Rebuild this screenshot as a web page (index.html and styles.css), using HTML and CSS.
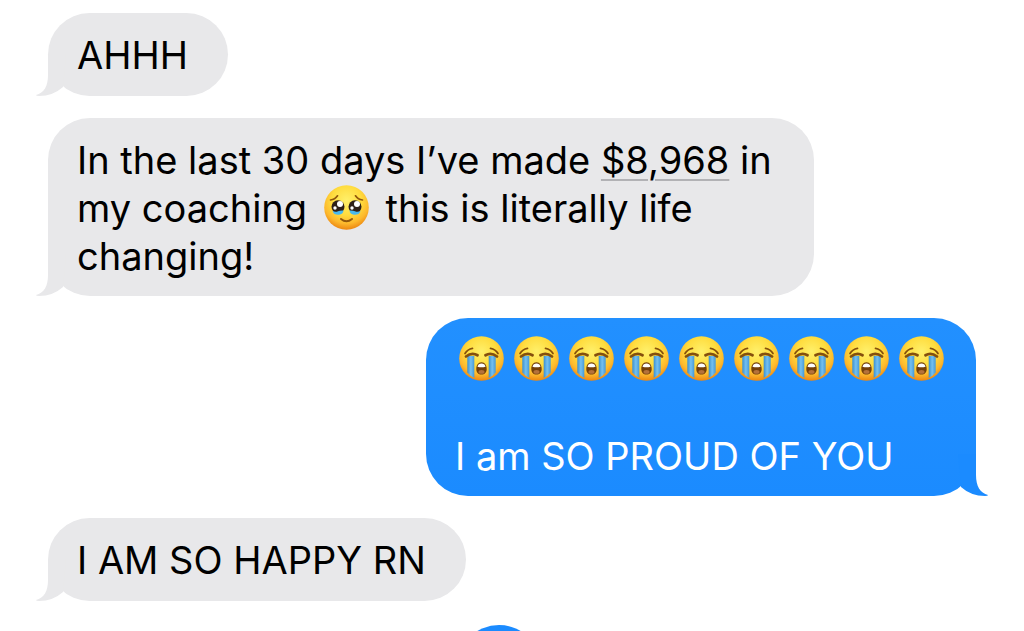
FILE: index.html
```
<!DOCTYPE html>
<html lang="en">

<head>
  <meta charset="UTF-8">
  <meta name="viewport" content="width=device-width, initial-scale=1.0">
  <title>Messages</title>
  <link rel="stylesheet" href="styles.css">
</head>

<body>
  <!-- Shared drawings -->
  <svg class="defs" aria-hidden="true">
    <defs>
      <radialGradient id="face" cx="50%" cy="34%" r="66%">
        <stop offset="0" stop-color="#fff06a"/>
        <stop offset="0.5" stop-color="#ffdc3e"/>
        <stop offset="0.78" stop-color="#fdb92d"/>
        <stop offset="1" stop-color="#ec8611"/>
      </radialGradient>
      <linearGradient id="tears" x1="0" y1="0" x2="1" y2="0">
        <stop offset="0" stop-color="#3a8fd0"/>
        <stop offset="0.5" stop-color="#74c0f0"/>
        <stop offset="1" stop-color="#4599d8"/>
      </linearGradient>
      <symbol id="sob" viewBox="0 0 45 45">
        <circle cx="22.5" cy="22.5" r="22.3" fill="url(#face)"/>
        <path d="M8.3 20h7v22q-4.2-2.200-7-5.500z" fill="url(#tears)"/>
        <path d="M29.700 20h7v16.500q-2.800 3.300-7 5.500z" fill="url(#tears)"/>
        <g fill="none" stroke="#85500d" stroke-linecap="round">
          <path d="M6 17.500Q8.500 13.200 13.500 12.300" stroke-width="1.700"/>
          <path d="M39 17.500Q36.500 13.200 31.500 12.300" stroke-width="1.700"/>
          <path d="M7 20.500Q13 15.800 18.500 19.300" stroke-width="2.800"/>
          <path d="M38 20.500Q32 15.800 26.500 19.300" stroke-width="2.800"/>
        </g>
        <path d="M22.500 26.300c3.500 0 5.200 3.300 5.200 6.600 0 3.500-2 5.600-5.200 5.600s-5.200-2.100-5.200-5.600c0-3.300 1.700-6.600 5.200-6.600z" fill="#744009"/>
        <path d="M18.500 30.800q.800-3.300 4-3.300t4 3.300q-4 1-8 0z" fill="#fff"/>
        <ellipse cx="22.500" cy="35.900" rx="3" ry="1.900" fill="#b5713b"/>
      </symbol>
      <symbol id="touched" viewBox="0 0 45 45">
        <circle cx="22.500" cy="22.500" r="22.300" fill="url(#face)"/>
        <g fill="none" stroke="#91570c" stroke-linecap="round" stroke-width="1.700">
          <path d="M6.500 15Q11 14.500 13.500 10.800"/>
          <path d="M38.500 15Q34 14.500 31.500 10.800"/>
          <path d="M17 34Q22.500 38.500 28 34" stroke-width="2"/>
        </g>
        <circle cx="14" cy="21.800" r="6.500" fill="#2e2018"/>
        <circle cx="31" cy="21.800" r="6.500" fill="#2e2018"/>
        <path d="M8.500 26q3 1.500 5.500.300t5.500-.800q-.500 3.800-4.500 4.300-5 .500-6.500-3.800z" fill="#49b9ef"/>
        <path d="M36.500 26q-3 1.500-5.500.300t-5.500-.800q.500 3.800 4.500 4.300 5 .500 6.500-3.800z" fill="#49b9ef"/>
        <g fill="#fff">
          <circle cx="16" cy="19" r="3"/>
          <circle cx="11" cy="23" r="1.700"/>
          <circle cx="33" cy="19" r="3"/>
          <circle cx="28" cy="23" r="1.700"/>
        </g>
      </symbol>
      <symbol id="tail" viewBox="0 0 30 42">
        <path d="M12 0V21C12 32 8 39 0 41Q0 42 3 42Q17 42 27 33L30 0Z" fill="currentColor"/>
      </symbol>
    </defs>
  </svg>

  <main class="chat">
    <div class="bubble received">
      <p>AHHH</p>
      <svg class="tail"><use href="#tail"/></svg>
    </div>

    <div class="bubble received long">
      <p>In the last 30 days I’ve made <a class="amount" href="#">$8,968</a> in my coaching <svg class="emoji inline" role="img" aria-label="Face holding back tears"><use href="#touched"/></svg> this is literally life changing!</p>
      <svg class="tail"><use href="#tail"/></svg>
    </div>

    <div class="bubble sent">
      <div class="emoji-row" role="img" aria-label="Nine loudly crying faces">
        <svg class="emoji"><use href="#sob"/></svg>
        <svg class="emoji"><use href="#sob"/></svg>
        <svg class="emoji"><use href="#sob"/></svg>
        <svg class="emoji"><use href="#sob"/></svg>
        <svg class="emoji"><use href="#sob"/></svg>
        <svg class="emoji"><use href="#sob"/></svg>
        <svg class="emoji"><use href="#sob"/></svg>
        <svg class="emoji"><use href="#sob"/></svg>
        <svg class="emoji"><use href="#sob"/></svg>
      </div>
      <p>I am SO PROUD OF YOU</p>
      <svg class="tail"><use href="#tail"/></svg>
    </div>

    <div class="bubble received">
      <p>I AM SO HAPPY RN</p>
      <svg class="tail"><use href="#tail"/></svg>
    </div>

    <div class="reaction"></div>
  </main>
</body>

</html>
```
FILE: styles.css
```
* {
  box-sizing: border-box;
}

body {
  margin: 0;
  height: 100vh;
  overflow: hidden;
  background-color: #ffffff;
  font-family: Inter, "Liberation Sans", sans-serif;
  font-size: 38px;
  line-height: 48px;
}

p {
  margin: 0;
}

.defs {
  position: absolute;
  width: 0;
  height: 0;
}

.chat {
  display: flex;
  flex-direction: column;
  align-items: flex-start;
  gap: 22px;
  padding: 13px 48px 0;
}

.bubble {
  position: relative;
  flex-shrink: 0;
  padding: 18px 40px 17px 29px;
  border-radius: 42px;
}

.received {
  background-color: #e8e8ea;
  color: #000000;
}

.long {
  max-width: 766px;
  padding-bottom: 16px;
}

.sent {
  align-self: flex-end;
  padding: 18px 32px 16px 29px;
  background: linear-gradient(#2290ff, #1b8bff);
  color: #ffffff;
}

.tail {
  position: absolute;
  bottom: 0;
  left: -12px;
  width: 30px;
  height: 42px;
}

.received .tail {
  color: #e8e8ea;
}

.sent .tail {
  left: auto;
  right: -12px;
  color: #1b8bff;
  transform: scaleX(-1);
}

.amount {
  color: inherit;
  text-decoration: underline #b2b2b5 2px;
  text-underline-offset: 5px;
}

.emoji {
  width: 45px;
  height: 45px;
}

.inline {
  margin: -8px 6px 0;
  vertical-align: -8px;
}

.emoji-row {
  display: flex;
  gap: 10px;
  height: 48px;
  margin-bottom: 48px;
  padding-left: 4px;
}

.reaction {
  align-self: center;
  flex-shrink: 0;
  width: 84px;
  height: 84px;
  margin-top: 2px;
  margin-right: 26px;
  border-radius: 50%;
  background-color: #1b8bff;
}
```
